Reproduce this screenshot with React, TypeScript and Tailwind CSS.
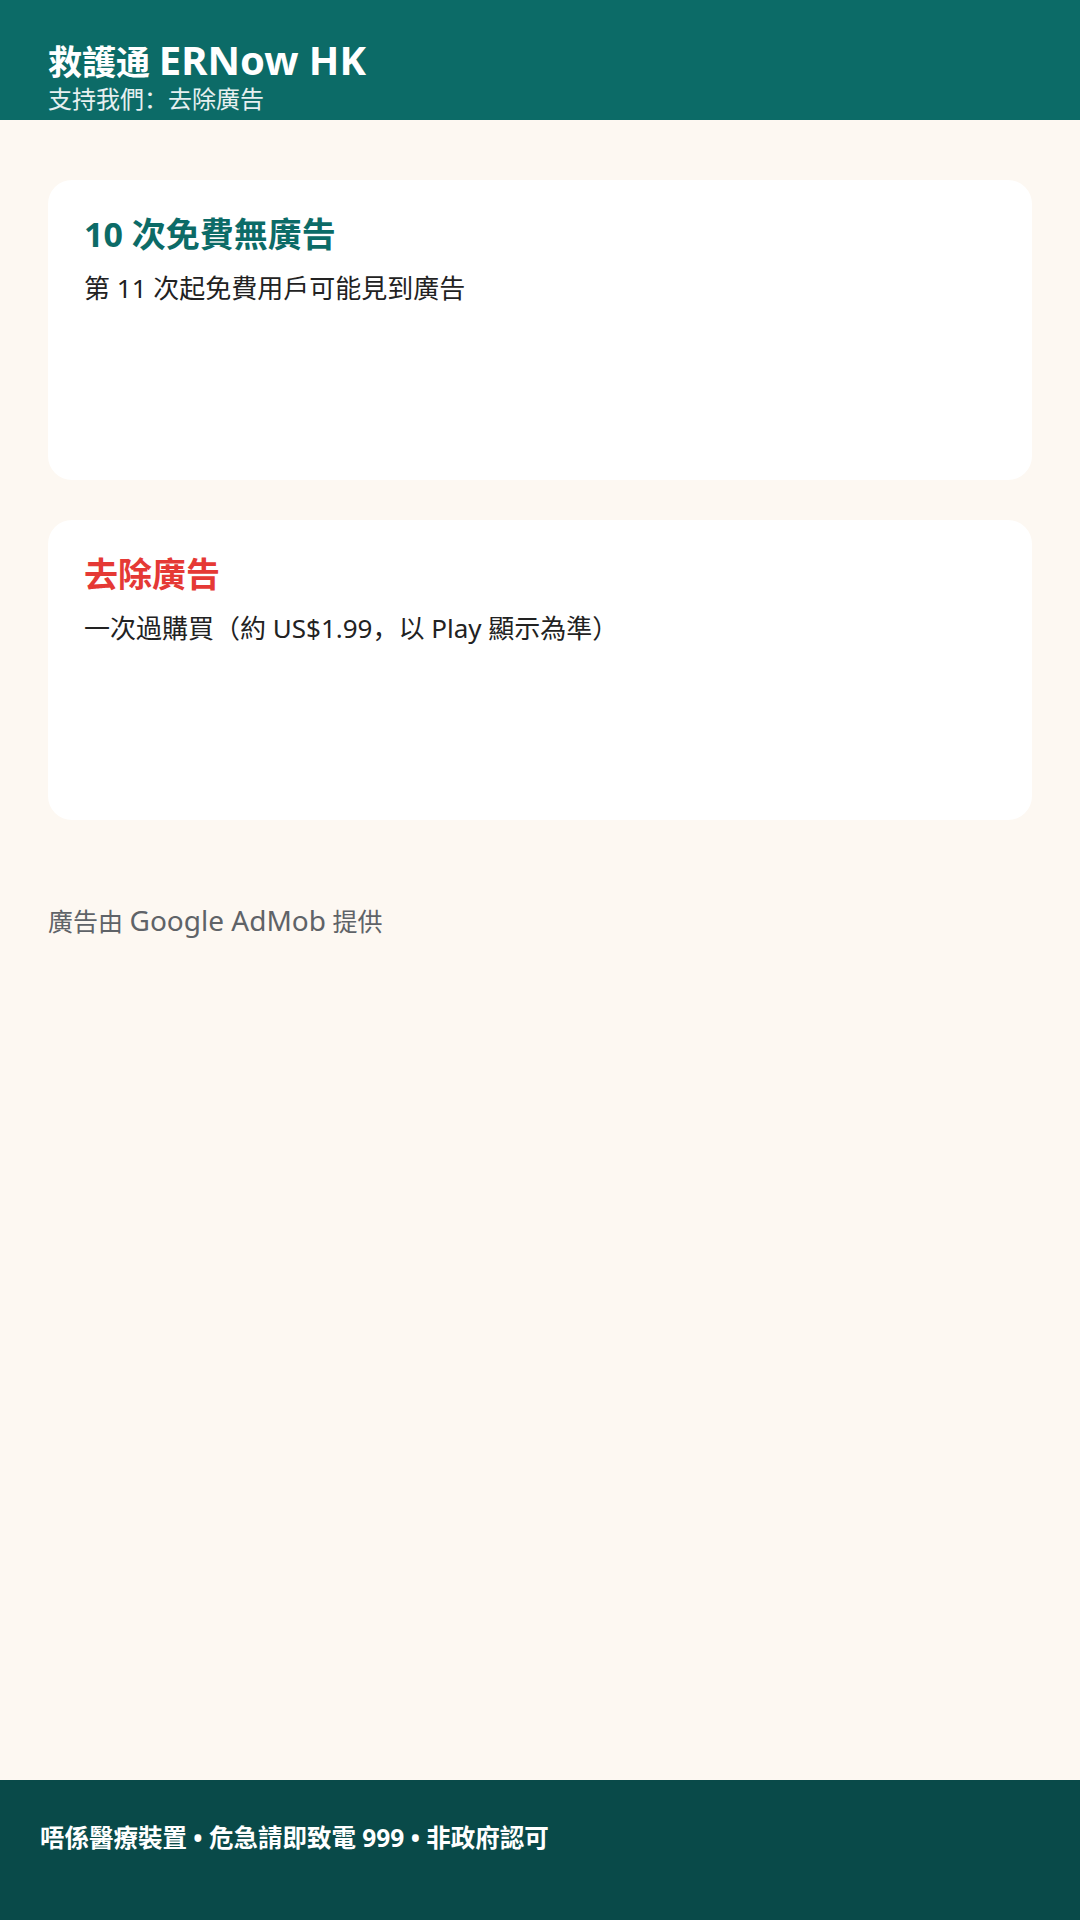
export default function App() {
  return (
    <div
      className="flex min-h-[1920px] w-full flex-col bg-[#fdf8f2]"
      style={{ fontFamily: '"Noto Sans", "Noto Sans CJK SC", sans-serif' }}
    >
      {/* Top bar */}
      <header className="h-[120px] bg-[#0c6b67] pl-[48px] pt-[40px] text-white">
        <h1 className="text-[34px] font-bold leading-[40px]">
          救護通 <span className="text-[40px]">ERNow HK</span>
        </h1>
        <p className="mt-[4px] text-[24px] leading-[26px] text-white/90">支持我們：去除廣告</p>
      </header>

      <main className="flex flex-1 flex-col px-[48px] pt-[60px]">
        <div className="flex flex-col gap-[40px]">
          <section className="h-[300px] rounded-[24px] bg-white px-[36px] pt-[32px]">
            <h2 className="text-[34px] font-bold leading-[44px] text-[#0c6b67]">10 次免費無廣告</h2>
            <p className="mt-[14px] text-[26px] leading-[36px] text-[#222222]">第 11 次起免費用戶可能見到廣告</p>
          </section>

          <section className="h-[300px] rounded-[24px] bg-white px-[36px] pt-[32px]">
            <h2 className="text-[34px] font-bold leading-[44px] text-[#e53935]">去除廣告</h2>
            <p className="mt-[14px] text-[26px] leading-[36px] text-[#222222]">
              一次過購買（約 US$1.99，以 Play 顯示為準）
            </p>
          </section>
        </div>

        <p className="mt-[82px] text-[25px] leading-[36px] text-[#5f6368]">
          廣告由 <span className="text-[28px]">Google AdMob</span> 提供
        </p>
      </main>

      <footer className="h-[140px] bg-[#094a49] pl-[40px] pt-[40px]">
        <p className="text-[24.5px] font-bold leading-[36px] text-white">
          唔係醫療裝置 • 危急請即致電 999 • 非政府認可
        </p>
      </footer>
    </div>
  );
}
